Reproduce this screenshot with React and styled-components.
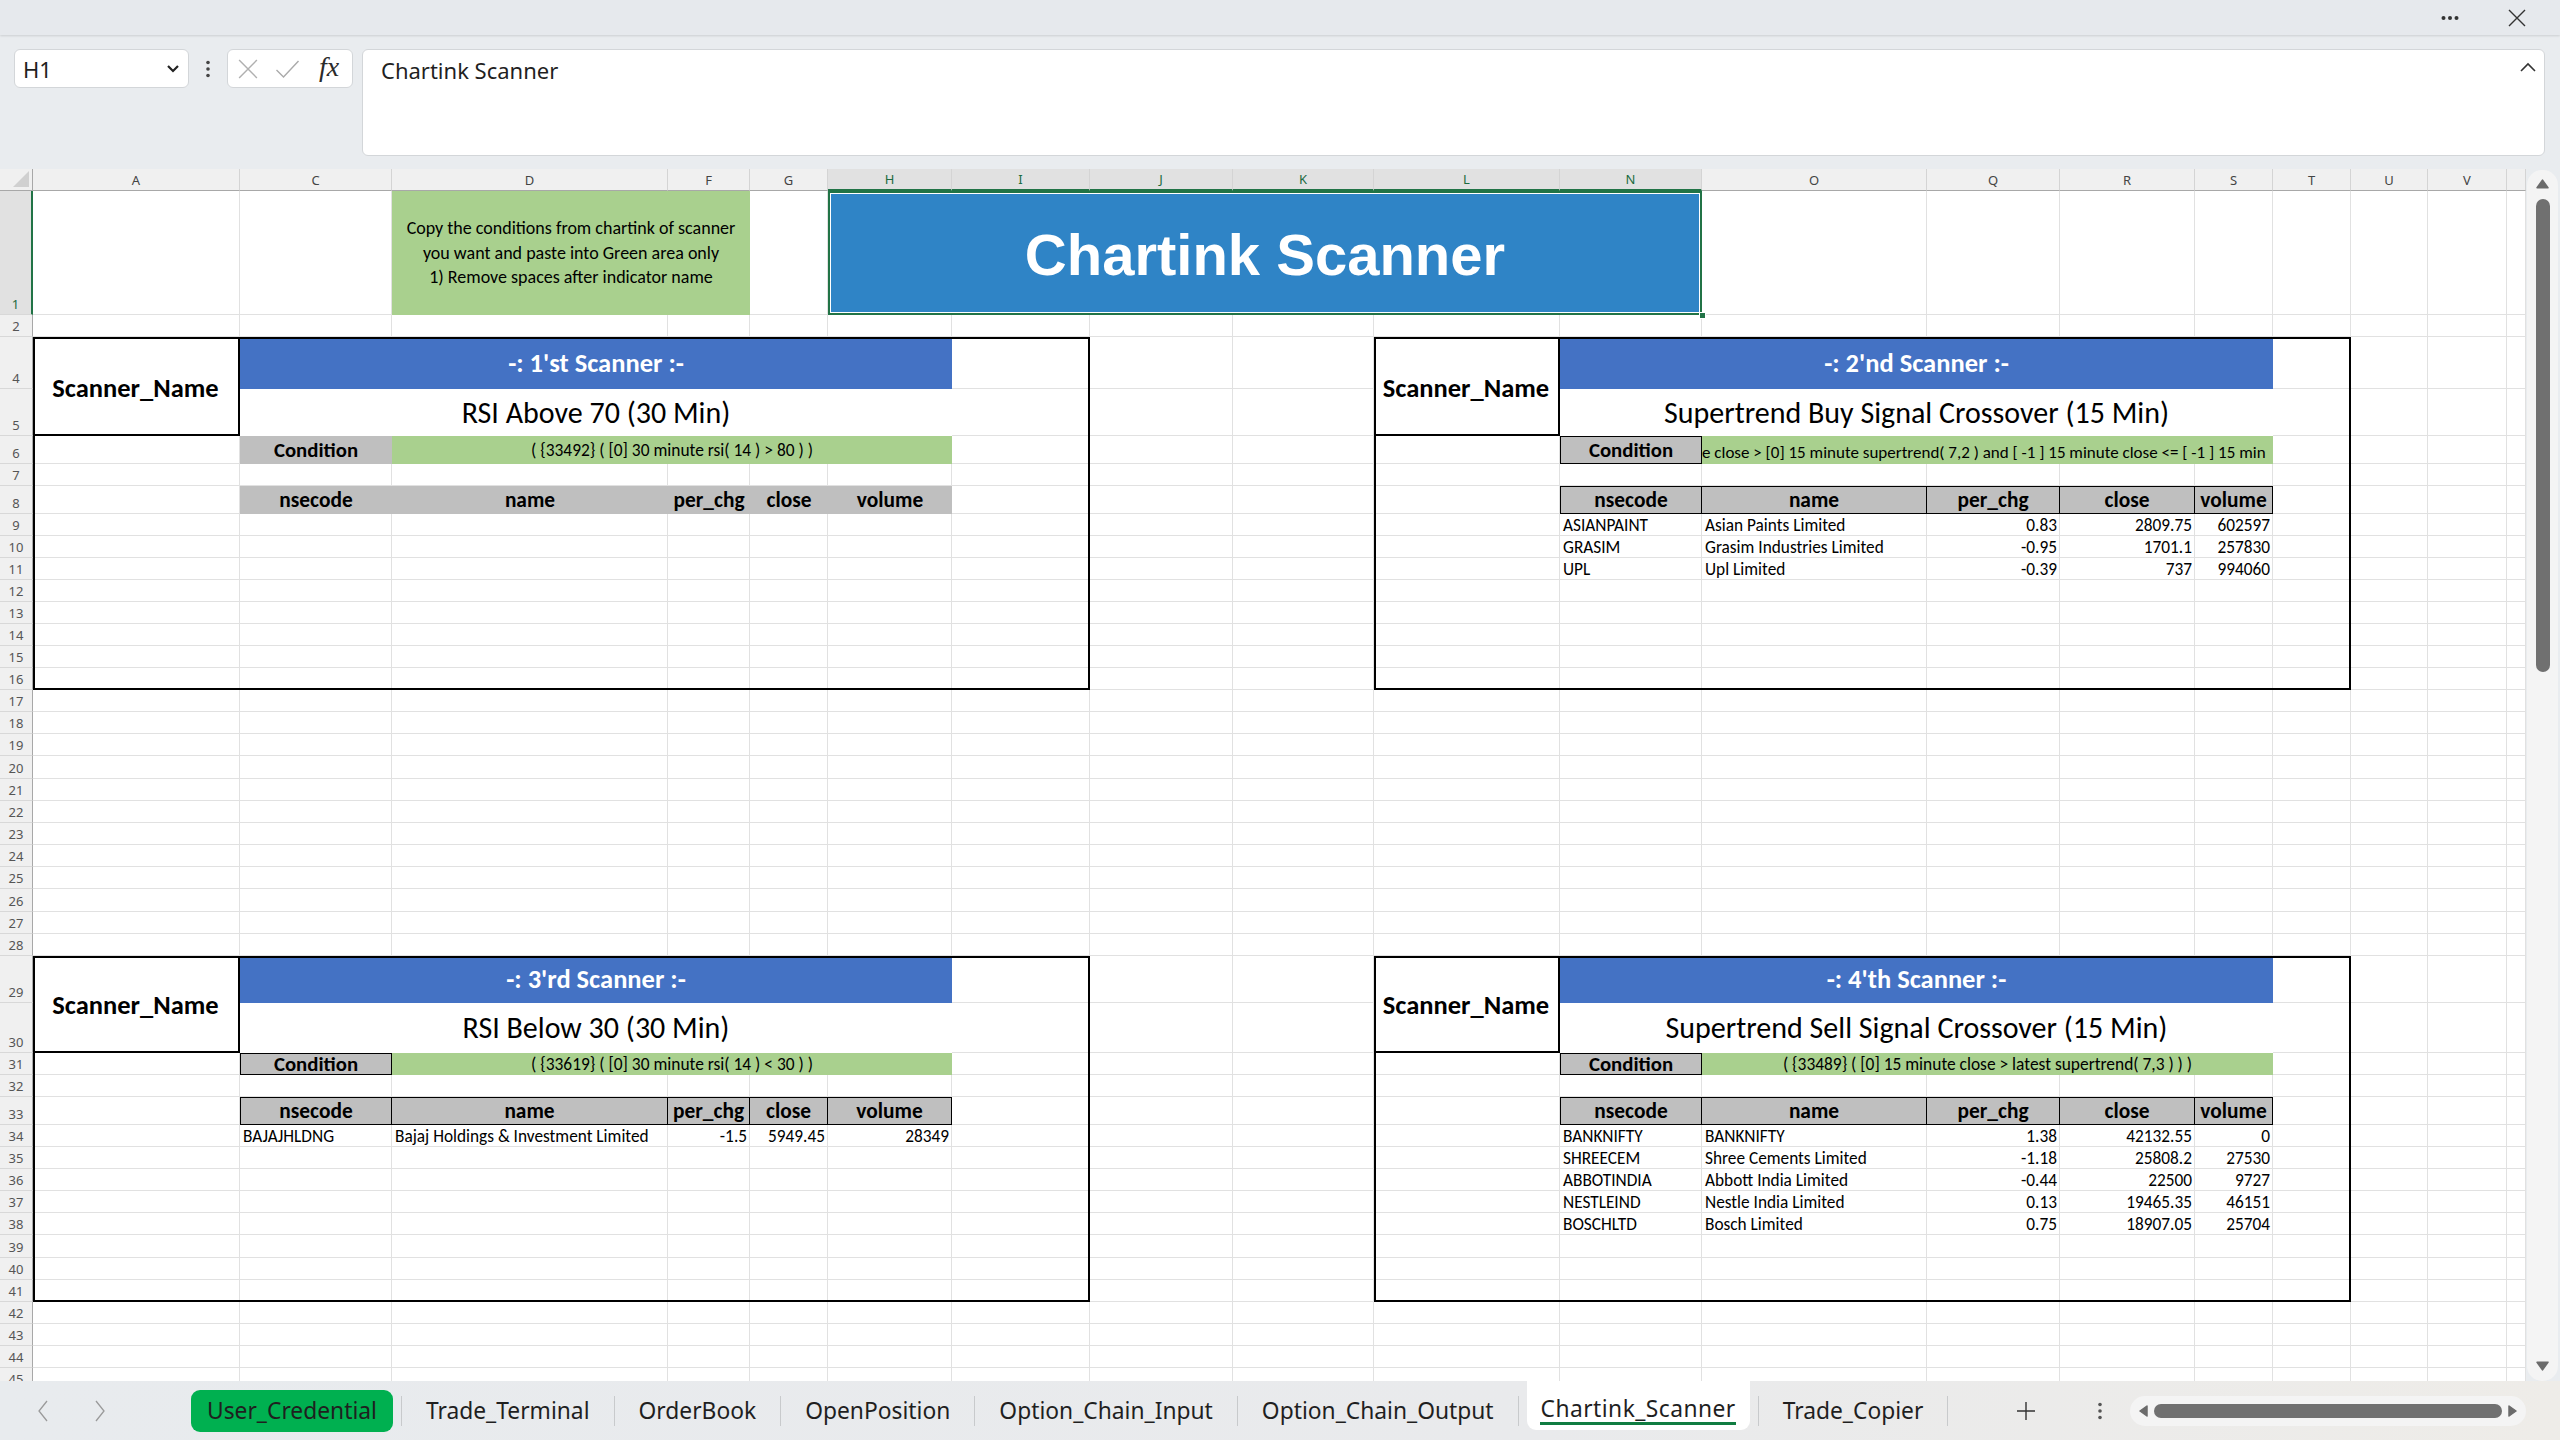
import React from 'react';
import styled, { createGlobalStyle } from 'styled-components';

const UI = `"Noto Sans", "Open Sans", sans-serif`;
const CELL = `Carlito, Lato, "Liberation Sans", sans-serif`;

const GlobalStyle = createGlobalStyle`
  html, body { margin: 0; padding: 0; }
  body { width: 2560px; height: 1440px; overflow: hidden; background: #e9ecef; }
  * { box-sizing: border-box; }
`;

const range = (a, b) => Array.from({ length: b - a + 1 }, (_, i) => a + i);

const COLS = [
  ['A', 207], ['C', 152], ['D', 276], ['F', 82], ['G', 78], ['H', 124], ['I', 138], ['J', 143],
  ['K', 141], ['L', 186], ['N', 142], ['O', 225], ['Q', 133], ['R', 135], ['S', 78], ['T', 78],
  ['U', 77], ['V', 79], ['W', 19],
];
const ROWS = [
  [1, 124], [2, 22], [4, 52], [5, 47], [6, 28], [7, 22], [8, 28],
  ...range(9, 16).map((n) => [n, 22]),
  ...range(17, 28).map((n) => [n, 22.17]),
  [29, 47], [30, 50], [31, 22], [32, 22], [33, 28],
  ...range(34, 41).map((n) => [n, 22.12]),
  ...range(42, 45).map((n) => [n, 22]),
];
const SELECTED_COLS = ['H', 'I', 'J', 'K', 'L', 'N'];

const ci = (l) => COLS.findIndex((c) => c[0] === l) + 2;
const ri = (n) => ROWS.findIndex((r) => r[0] === n) + 2;
const area = (r1, c1, r2 = r1, c2 = c1) => `${ri(r1)} / ${ci(c1)} / ${ri(r2) + 1} / ${ci(c2) + 1}`;

const BLOCKS = [
  {
    top: 4, bottom: 16, nameCol: 'A', endCol: 'I', heads: ['C', 'D', 'F', 'G', 'H'], bordered: false,
    header: "-: 1'st Scanner :-", title: 'RSI Above 70 (30 Min)',
    cond: '( {33492} ( [0] 30 minute rsi( 14 ) > 80 ) )', condAlign: 'center', rows: [],
  },
  {
    top: 4, bottom: 16, nameCol: 'L', endCol: 'T', heads: ['N', 'O', 'Q', 'R', 'S'], bordered: true,
    header: "-: 2'nd Scanner :-", title: 'Supertrend Buy Signal Crossover (15 Min)',
    cond: 'e close > [0] 15 minute supertrend( 7,2 ) and [ -1 ] 15 minute close <= [ -1 ] 15 min', condAlign: 'clip',
    rows: [
      ['ASIANPAINT', 'Asian Paints Limited', '0.83', '2809.75', '602597'],
      ['GRASIM', 'Grasim Industries Limited', '-0.95', '1701.1', '257830'],
      ['UPL', 'Upl Limited', '-0.39', '737', '994060'],
    ],
  },
  {
    top: 29, bottom: 41, nameCol: 'A', endCol: 'I', heads: ['C', 'D', 'F', 'G', 'H'], bordered: true,
    header: "-: 3'rd Scanner :-", title: 'RSI Below 30 (30 Min)',
    cond: '( {33619} ( [0] 30 minute rsi( 14 ) < 30 ) )', condAlign: 'center',
    rows: [['BAJAJHLDNG', 'Bajaj Holdings & Investment Limited', '-1.5', '5949.45', '28349']],
  },
  {
    top: 29, bottom: 41, nameCol: 'L', endCol: 'T', heads: ['N', 'O', 'Q', 'R', 'S'], bordered: true,
    header: "-: 4'th Scanner :-", title: 'Supertrend Sell Signal Crossover (15 Min)',
    cond: '( {33489} ( [0] 15 minute close > latest supertrend( 7,3 ) ) )', condAlign: 'center',
    rows: [
      ['BANKNIFTY', 'BANKNIFTY', '1.38', '42132.55', '0'],
      ['SHREECEM', 'Shree Cements Limited', '-1.18', '25808.2', '27530'],
      ['ABBOTINDIA', 'Abbott India Limited', '-0.44', '22500', '9727'],
      ['NESTLEIND', 'Nestle India Limited', '0.13', '19465.35', '46151'],
      ['BOSCHLTD', 'Bosch Limited', '0.75', '18907.05', '25704'],
    ],
  },
];
const HEAD_LABELS = ['nsecode', 'name', 'per_chg', 'close', 'volume'];

const TABS = ['User_Credential', 'Trade_Terminal', 'OrderBook', 'OpenPosition', 'Option_Chain_Input', 'Option_Chain_Output', 'Chartink_Scanner', 'Trade_Copier'];

/* ---------- window chrome ---------- */
const Window = styled.div`
  width: 2560px;
  height: 1440px;
  display: flex;
  flex-direction: column;
  background: #e9ecef;
  font-family: ${UI};
`;
const TopBar = styled.div`
  height: 35px;
  flex: none;
  display: flex;
  align-items: center;
  justify-content: flex-end;
  gap: 49px;
  padding-right: 34px;
  background: #e6e9ed;
  box-shadow: 0 1px 2px rgba(0, 0, 0, 0.12);
  position: relative;
  z-index: 2;
`;
const FormulaRow = styled.div`
  height: 134px;
  flex: none;
  display: flex;
  align-items: flex-start;
  padding: 14px 15px 0 14px;
`;
const NameBox = styled.div`
  width: 175px;
  height: 39px;
  background: #fff;
  border: 1px solid #d3d6d9;
  border-radius: 6px;
  display: flex;
  align-items: center;
  justify-content: space-between;
  padding: 0 8px 0 8px;
  font-size: 22px;
  color: #1f1f1f;
`;
const DotsBtn = styled.div`
  width: 38px;
  height: 39px;
  display: flex;
  align-items: center;
  justify-content: center;
`;
const FxBox = styled.div`
  width: 126px;
  height: 39px;
  margin-right: 9px;
  background: #fff;
  border: 1px solid #d3d6d9;
  border-radius: 6px;
  display: flex;
  align-items: center;
  padding-left: 10px;
  gap: 17px;
`;
const FxText = styled.span`
  font-family: "Liberation Serif", serif;
  font-style: italic;
  font-size: 28px;
  line-height: 1;
  color: #2b2b2b;
  margin-left: 2px;
  margin-top: -3px;
`;
const FormulaInput = styled.div`
  flex: 1;
  height: 107px;
  background: #fff;
  border: 1px solid #d3d6d9;
  border-radius: 6px;
  padding: 5px 40px 0 18px;
  font-size: 22px;
  line-height: 30px;
  color: #1f1f1f;
  position: relative;
`;
const CollapseIcon = styled.svg`
  position: absolute;
  right: 8px;
  top: 12px;
`;

/* ---------- sheet ---------- */
const SheetRow = styled.div`
  height: 1212px;
  flex: none;
  display: flex;
`;
const Sheet = styled.div`
  display: grid;
  grid-template-columns: 33px ${COLS.map((c) => `${c[1]}px`).join(' ')};
  grid-template-rows: 22px ${ROWS.map((r) => `${r[1]}px`).join(' ')};
  width: 2526px;
  height: 1212px;
  overflow: hidden;
  background: #fff;
`;
const Gridline = styled.div`
  grid-area: ${(p) => p.$area};
  border-right: 1px solid #e1e1e1;
  border-bottom: 1px solid #e1e1e1;
`;
const Corner = styled.div`
  grid-area: 1 / 1 / 2 / 2;
  background: #f0f0f0;
  border-right: 1px solid #a8a8a8;
  border-bottom: 1px solid #a8a8a8;
  display: flex;
  align-items: flex-end;
  justify-content: flex-end;
  padding: 0 3px 3px 0;
`;
const ColHead = styled.div`
  grid-area: ${(p) => p.$area};
  display: flex;
  align-items: center;
  justify-content: center;
  background: ${(p) => (p.$sel ? '#e1e1e1' : '#f0f0f0')};
  color: ${(p) => (p.$sel ? '#1b6b3f' : '#444')};
  border-right: 1px solid #d4d4d4;
  border-bottom: ${(p) => (p.$sel ? '2px solid #217346' : '1px solid #a8a8a8')};
  font-size: 13px;
`;
const RowHead = styled.div`
  grid-area: ${(p) => p.$area};
  display: flex;
  align-items: flex-end;
  justify-content: center;
  padding-bottom: 2px;
  background: ${(p) => (p.$sel ? '#e1e1e1' : '#f0f0f0')};
  color: ${(p) => (p.$sel ? '#1b6b3f' : '#555')};
  border-right: ${(p) => (p.$sel ? '2px solid #217346' : '1px solid #a8a8a8')};
  border-bottom: 1px solid #d8d8d8;
  font-size: 13px;
  line-height: 16px;
`;
const NoteCell = styled.div`
  grid-area: ${(p) => p.$area};
  z-index: 1;
  background: #a9d08e;
  display: flex;
  flex-direction: column;
  align-items: center;
  justify-content: center;
  font-family: ${CELL};
  font-size: 18px;
  line-height: 24.5px;
  color: #000;
  white-space: nowrap;
`;
const TitleCell = styled.div`
  grid-area: ${(p) => p.$area};
  z-index: 3;
  position: relative;
  background: #2f84c6;
  box-shadow: inset 0 0 0 2px #217346, inset 0 0 0 3px #fff;
  display: flex;
  align-items: center;
  justify-content: center;
  font-family: "Liberation Sans", Arial, sans-serif;
  font-weight: 700;
  font-size: 58px;
  color: #fff;
  padding-top: 2px;
`;
const FillHandle = styled.div`
  position: absolute;
  right: -4px;
  bottom: -4px;
  width: 7px;
  height: 7px;
  background: #217346;
  border: 1px solid #fff;
`;
const Frame = styled.div`
  grid-area: ${(p) => p.$area};
  z-index: 2;
  border: 2px solid #000;
  pointer-events: none;
`;
const NameCell = styled.div`
  grid-area: ${(p) => p.$area};
  z-index: 1;
  background: #fff;
  border-right: 2px solid #000;
  border-bottom: 2px solid #000;
  display: flex;
  align-items: center;
  justify-content: center;
  font-family: ${CELL};
  font-weight: 700;
  font-size: 26.5px;
  color: #000;
  padding-top: 4px;
  white-space: nowrap;
`;
const BlueHeader = styled.div`
  grid-area: ${(p) => p.$area};
  z-index: 1;
  background: #4472c4;
  display: flex;
  align-items: center;
  justify-content: center;
  font-family: ${CELL};
  font-weight: 700;
  font-size: 26.5px;
  color: #fff;
`;
const ScanTitle = styled.div`
  grid-area: ${(p) => p.$area};
  z-index: 1;
  background: #fff;
  display: flex;
  align-items: center;
  justify-content: center;
  font-family: ${CELL};
  font-size: 30px;
  color: #000;
  white-space: nowrap;
`;
const CondLabel = styled.div`
  grid-area: ${(p) => p.$area};
  z-index: 1;
  background: #bfbfbf;
  border: ${(p) => (p.$bordered ? '1px solid #000' : 'none')};
  display: flex;
  align-items: center;
  justify-content: center;
  font-family: ${CELL};
  font-weight: 700;
  font-size: 20.8px;
  color: #000;
`;
const CondValue = styled.div`
  grid-area: ${(p) => p.$area};
  z-index: 1;
  background: #a9d08e;
  display: flex;
  align-items: center;
  justify-content: ${(p) => (p.$clip ? 'flex-start' : 'center')};
  padding-top: ${(p) => (p.$clip ? '4px' : '0')};
  overflow: hidden;
  white-space: nowrap;
  font-family: ${CELL};
  font-size: ${(p) => (p.$clip ? '17px' : '17.4px')};
  color: #000;
`;
const HeadCell = styled.div`
  grid-area: ${(p) => p.$area};
  z-index: 1;
  background: #bfbfbf;
  border-top: ${(p) => (p.$bordered ? '1px solid #000' : 'none')};
  border-bottom: ${(p) => (p.$bordered ? '1px solid #000' : 'none')};
  border-right: ${(p) => (p.$bordered ? '1px solid #000' : 'none')};
  border-left: ${(p) => (p.$bordered && p.$first ? '1px solid #000' : 'none')};
  display: flex;
  align-items: center;
  justify-content: center;
  font-family: ${CELL};
  font-weight: 700;
  font-size: 21.4px;
  color: #000;
  white-space: nowrap;
  overflow: hidden;
`;
const DataCell = styled.div`
  grid-area: ${(p) => p.$area};
  z-index: 1;
  display: flex;
  align-items: flex-end;
  justify-content: ${(p) => (p.$right ? 'flex-end' : 'flex-start')};
  padding: 0 3px 0 3px;
  font-family: ${CELL};
  font-size: 17.3px;
  line-height: 20px;
  color: #000;
  white-space: nowrap;
`;

/* ---------- scrollbars ---------- */
const VScrollWrap = styled.div`
  width: 34px;
  height: 1212px;
  padding: 1px 2px 0 1px;
`;
const VTrack = styled.div`
  height: 100%;
  background: #f4f4f4;
  border-radius: 15px;
  display: flex;
  flex-direction: column;
  align-items: center;
  padding: 8px 0 9px;
`;
const VThumb = styled.div`
  width: 14px;
  height: 473px;
  margin-top: 8px;
  border-radius: 7px;
  background: #707070;
`;
const Spacer = styled.div`
  flex: 1;
`;

/* ---------- tabs ---------- */
const TabBar = styled.div`
  height: 59px;
  flex: none;
  display: flex;
  align-items: center;
  background: linear-gradient(90deg, #e8ebee 0%, #e9eaec 60%, #eeece8 100%);
`;
const NavArrows = styled.div`
  width: 183px;
  height: 100%;
  flex: none;
  display: flex;
  align-items: center;
  padding-left: 36px;
  gap: 43px;
`;
const Tab = styled.div`
  flex: none;
  margin: 0 8px;
  height: ${(p) => (p.$active ? '49px' : '42px')};
  align-self: ${(p) => (p.$active ? 'flex-start' : 'center')};
  padding: ${(p) => (p.$active ? '6px 14px 0' : '0 16px')};
  display: flex;
  align-items: center;
  position: relative;
  border-radius: ${(p) => (p.$active ? '0 0 9px 9px' : '9px')};
  background: ${(p) => (p.$active ? '#fff' : p.$green ? '#00b050' : 'transparent')};
  font-size: 22.8px;
  letter-spacing: ${(p) => (p.$active ? '0.45px' : '0')};
  color: #1f1f1f;
  white-space: nowrap;
`;
const TabUnderline = styled.div`
  position: absolute;
  left: 13px;
  right: 14px;
  bottom: 5px;
  height: 3px;
  background: #107c41;
`;
const TabSep = styled.div`
  width: 1px;
  height: 30px;
  background: #c8cacc;
  flex: none;
`;
const RightTools = styled.div`
  margin-left: auto;
  margin-right: 34px;
  display: flex;
  align-items: center;
`;
const ToolBtn = styled.div`
  width: ${(p) => p.$w}px;
  height: 30px;
  display: flex;
  align-items: center;
  justify-content: center;
  margin-right: ${(p) => p.$mr}px;
`;
const HTrack = styled.div`
  width: 396px;
  height: 30px;
  background: #f4f4f4;
  border-radius: 15px;
  display: flex;
  align-items: center;
  padding: 0 8px 0 8px;
  gap: 4px;
`;
const HThumb = styled.div`
  flex: 1;
  height: 14px;
  border-radius: 7px;
  background: #707070;
`;

/* ---------- icons ---------- */
const MoreIcon = () => (
  <svg width="18" height="6" viewBox="0 0 18 6">
    <circle cx="2.5" cy="3" r="2" fill="#333" />
    <circle cx="9" cy="3" r="2" fill="#333" />
    <circle cx="15.5" cy="3" r="2" fill="#333" />
  </svg>
);
const CloseIcon = ({ size = 18, color = '#333', w = 1.4 }) => (
  <svg width={size} height={size} viewBox="0 0 18 18">
    <path d="M1 1 L17 17 M17 1 L1 17" stroke={color} strokeWidth={w} fill="none" />
  </svg>
);
const ChevronDown = () => (
  <svg width="14" height="9" viewBox="0 0 14 9">
    <path d="M2 2 L7 7 L12 2" stroke="#222" strokeWidth="2.2" fill="none" />
  </svg>
);
const VDots = ({ color = '#444' }) => (
  <svg width="4" height="18" viewBox="0 0 4 18">
    <circle cx="2" cy="2.5" r="1.8" fill={color} />
    <circle cx="2" cy="9" r="1.8" fill={color} />
    <circle cx="2" cy="15.5" r="1.8" fill={color} />
  </svg>
);
const CheckIcon = () => (
  <svg width="25" height="20" viewBox="0 0 24 20">
    <path d="M1 11 L8 18 L23 2" stroke="#aaa" strokeWidth="1.4" fill="none" />
  </svg>
);
const CaretUpLine = () => (
  <CollapseIcon width="16" height="10" viewBox="0 0 16 10">
    <path d="M1 9 L8 2 L15 9" stroke="#333" strokeWidth="1.6" fill="none" />
  </CollapseIcon>
);
const Triangle = ({ dir, size = 12, color = '#6b6b6b' }) => {
  const d = {
    up: 'M1 9 L6 2 L11 9 Z',
    down: 'M1 3 L6 10 L11 3 Z',
    left: 'M9 1 L2 6 L9 11 Z',
    right: 'M3 1 L10 6 L3 11 Z',
  }[dir];
  return (
    <svg width={size} height={size} viewBox="0 0 12 12">
      <path d={d} fill={color} strokeLinejoin="round" stroke={color} strokeWidth="1.5" />
    </svg>
  );
};
const NavChevron = ({ right }) => (
  <svg width="14" height="24" viewBox="0 0 14 24">
    <path d={right ? 'M3 2 L11 12 L3 22' : 'M11 2 L3 12 L11 22'} stroke="#9a9a9a" strokeWidth="1.3" fill="none" />
  </svg>
);
const PlusIcon = () => (
  <svg width="20" height="20" viewBox="0 0 20 20">
    <path d="M10 1 V19 M1 10 H19" stroke="#333" strokeWidth="1.4" fill="none" />
  </svg>
);
const CornerTriangle = () => (
  <svg width="16" height="16" viewBox="0 0 16 16">
    <path d="M16 0 L16 16 L0 16 Z" fill="#d0d0d0" />
  </svg>
);

/* ---------- parts ---------- */
function GridBackground() {
  const cells = [];
  ROWS.forEach(([n]) => {
    COLS.forEach(([l]) => {
      cells.push(<Gridline key={`g${n}${l}`} $area={area(n, l)} />);
    });
  });
  return cells;
}

function Headers() {
  return (
    <>
      <Corner>
        <CornerTriangle />
      </Corner>
      {COLS.map(([l], i) => (
        <ColHead key={`c${l}`} $area={`1 / ${i + 2} / 2 / ${i + 3}`} $sel={SELECTED_COLS.includes(l)}>
          {l === 'W' ? '' : l}
        </ColHead>
      ))}
      {ROWS.map(([n], i) => (
        <RowHead key={`r${n}`} $area={`${i + 2} / 1 / ${i + 3} / 2`} $sel={n === 1}>
          {n}
        </RowHead>
      ))}
    </>
  );
}

function Block({ b }) {
  const [c1, c2, , , c5] = b.heads;
  const t = b.top;
  return (
    <>
      <NameCell $area={area(t, b.nameCol, t + 1, b.nameCol)}>Scanner_Name</NameCell>
      <BlueHeader $area={area(t, c1, t, c5)}>{b.header}</BlueHeader>
      <ScanTitle $area={area(t + 1, c1, t + 1, c5)}>{b.title}</ScanTitle>
      <CondLabel $area={area(t + 2, c1)} $bordered={b.bordered}>Condition</CondLabel>
      <CondValue $area={area(t + 2, c2, t + 2, c5)} $clip={b.condAlign === 'clip'}>{b.cond}</CondValue>
      {b.heads.map((c, i) => (
        <HeadCell key={c} $area={area(t + 4, c)} $bordered={b.bordered} $first={i === 0}>
          {HEAD_LABELS[i]}
        </HeadCell>
      ))}
      {b.rows.map((row, r) =>
        row.map((v, i) => (
          <DataCell key={`${r}-${i}`} $area={area(t + 5 + r, b.heads[i])} $right={i >= 2}>
            {v}
          </DataCell>
        ))
      )}
      <Frame $area={area(t, b.nameCol, b.bottom, b.endCol)} />
    </>
  );
}

export default function App() {
  return (
    <>
      <GlobalStyle />
      <Window>
        <TopBar>
          <MoreIcon />
          <CloseIcon />
        </TopBar>
        <FormulaRow>
          <NameBox>
            <span>H1</span>
            <ChevronDown />
          </NameBox>
          <DotsBtn>
            <VDots />
          </DotsBtn>
          <FxBox>
            <CloseIcon size={20} color="#b0b0b0" w={1.3} />
            <CheckIcon />
            <FxText>fx</FxText>
          </FxBox>
          <FormulaInput>
            Chartink Scanner
            <CaretUpLine />
          </FormulaInput>
        </FormulaRow>
        <SheetRow>
          <Sheet>
            <GridBackground />
            <Headers />
            <NoteCell $area={area(1, 'D', 1, 'F')}>
              <span>Copy the conditions from chartink of scanner</span>
              <span>you want and paste into Green area only</span>
              <span>1) Remove spaces after indicator name</span>
            </NoteCell>
            <TitleCell $area={area(1, 'H', 1, 'N')}>
              Chartink Scanner
              <FillHandle />
            </TitleCell>
            {BLOCKS.map((b, i) => (
              <Block key={i} b={b} />
            ))}
          </Sheet>
          <VScrollWrap>
            <VTrack>
              <Triangle dir="up" size={13} />
              <VThumb />
              <Spacer />
              <Triangle dir="down" size={13} />
            </VTrack>
          </VScrollWrap>
        </SheetRow>
        <TabBar>
          <NavArrows>
            <NavChevron />
            <NavChevron right />
          </NavArrows>
          {TABS.map((t) => (
            <React.Fragment key={t}>
              <Tab $active={t === 'Chartink_Scanner'} $green={t === 'User_Credential'}>
                {t}
                {t === 'Chartink_Scanner' && <TabUnderline />}
              </Tab>
              <TabSep />
            </React.Fragment>
          ))}
          <RightTools>
            <ToolBtn $w={34} $mr={42}>
              <PlusIcon />
            </ToolBtn>
            <ToolBtn $w={30} $mr={15}>
              <VDots color="#555" />
            </ToolBtn>
            <HTrack>
              <Triangle dir="left" size={12} />
              <HThumb />
              <Triangle dir="right" size={12} />
            </HTrack>
          </RightTools>
        </TabBar>
      </Window>
    </>
  );
}
